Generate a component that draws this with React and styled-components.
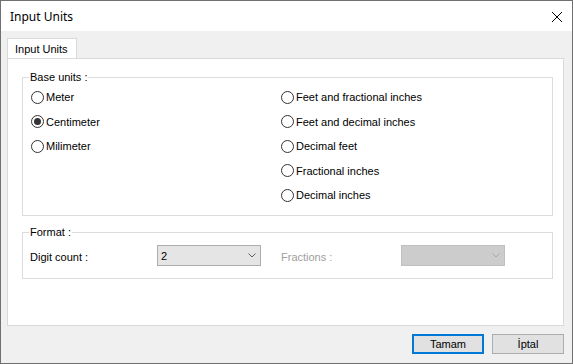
import React, { useState } from 'react';
import styled, { createGlobalStyle } from 'styled-components';

const GlobalStyle = createGlobalStyle`
  html, body {
    margin: 0;
    padding: 0;
    background: #f0f0f0;
  }
  * {
    box-sizing: border-box;
  }
`;

const Window = styled.div`
  width: 573px;
  height: 364px;
  border: 1px solid #707070;
  display: flex;
  flex-direction: column;
  font-family: "Liberation Sans", Arial, sans-serif;
  font-size: 11px;
  color: #000;
  background: #f0f0f0;
`;

const TitleBar = styled.div`
  height: 30px;
  background: #fff;
  display: flex;
  align-items: center;
  justify-content: space-between;
  padding: 0 10px 0 9px;
`;

const Title = styled.span`
  font-family: "Noto Sans", "Open Sans", sans-serif;
  font-size: 12px;
  line-height: 14px;
  margin-top: 2px;
`;

const CloseButton = styled.button`
  width: 10px;
  height: 10px;
  padding: 0;
  border: 0;
  background: none;
  display: flex;
  margin-top: 1px;
`;

const Body = styled.div`
  flex: 1;
  display: flex;
  flex-direction: column;
  padding: 7px 8px 9px 6px;
`;

const TabStrip = styled.div`
  display: flex;
  height: 20px;
`;

const Tab = styled.div`
  width: 70px;
  height: 20px;
  border: 1px solid #d9d9d9;
  border-bottom: 0;
  background: #fff;
  padding: 3px 0 0 7px;
  line-height: 14px;
`;

const Panel = styled.div`
  height: 268px;
  border: 1px solid #d9d9d9;
  background: #fff;
  padding: 18px 10px 0 14px;
  display: flex;
  flex-direction: column;
  gap: 16px;
`;

const GroupBox = styled.div`
  position: relative;
  height: ${(p) => p.$height}px;
  border: 1px solid #dcdcdc;
`;

const GroupLabel = styled.span`
  position: absolute;
  left: 6px;
  top: -8px;
  padding: 0 1px;
  background: #fff;
  line-height: 14px;
`;

const Columns = styled.div`
  display: flex;
  padding: 7px 0 0 8px;
`;

const Column = styled.div`
  width: ${(p) => p.$width || 'auto'};
  display: flex;
  flex-direction: column;
`;

const RadioRow = styled.label`
  height: 24.5px;
  display: flex;
  align-items: center;
  gap: 2px;
  cursor: default;
`;

const RadioCircle = styled.span`
  width: 13px;
  height: 13px;
  border-radius: 50%;
  border: 1px solid #333;
  background: #fff;
  display: flex;
  align-items: center;
  justify-content: center;
  flex: none;

  &::after {
    content: '';
    width: 7px;
    height: 7px;
    border-radius: 50%;
    background: ${(p) => (p.$checked ? '#333' : 'transparent')};
  }
`;

const FormatRow = styled.div`
  display: flex;
  align-items: center;
  padding: 12px 0 0 7px;
`;

const FieldLabel = styled.span`
  width: ${(p) => p.$width}px;
  color: ${(p) => (p.$disabled ? '#a0a0a0' : '#000')};
  line-height: 14px;
  margin-top: 3px;
`;

const Combo = styled.div`
  width: 104px;
  height: 21px;
  border: 1px solid ${(p) => (p.$disabled ? '#bfbfbf' : '#adadad')};
  background: ${(p) => (p.$disabled ? '#cccccc' : '#e5e5e5')};
  display: flex;
  align-items: center;
  justify-content: space-between;
  padding: 0 4px 0 3px;
  margin-right: ${(p) => p.$gap || 0}px;
`;

const ComboValue = styled.span`
  line-height: 14px;
`;

const ButtonBar = styled.div`
  display: flex;
  justify-content: flex-end;
  gap: 8px;
  margin-top: 8px;
`;

const DialogButton = styled.button`
  width: 72px;
  height: 20px;
  padding: 0;
  font-family: "Liberation Sans", Arial, sans-serif;
  font-size: 11px;
  color: #000;
  background: #e1e1e1;
  border: ${(p) => (p.$default ? '2px solid #0078d7' : '1px solid #adadad')};
`;

const Chevron = ({ color }) => (
  <svg width="8" height="5" viewBox="0 0 8 5">
    <path d="M0.5 0.5 L4 4 L7.5 0.5" fill="none" stroke={color} strokeWidth="1" />
  </svg>
);

const leftUnits = ['Meter', 'Centimeter', 'Milimeter'];
const rightUnits = [
  'Feet and fractional inches',
  'Feet and decimal inches',
  'Decimal feet',
  'Fractional inches',
  'Decimal inches',
];

export default function App() {
  const [unit, setUnit] = useState('Centimeter');

  const renderRadio = (name) => (
    <RadioRow key={name} onClick={() => setUnit(name)}>
      <RadioCircle $checked={unit === name} />
      <span>{name}</span>
    </RadioRow>
  );

  return (
    <>
      <GlobalStyle />
      <Window>
        <TitleBar>
          <Title>Input Units</Title>
          <CloseButton aria-label="Close">
            <svg width="10" height="10" viewBox="0 0 10 10">
              <path d="M0 0 L10 10 M10 0 L0 10" stroke="#000" strokeWidth="1" />
            </svg>
          </CloseButton>
        </TitleBar>
        <Body>
          <TabStrip>
            <Tab>Input Units</Tab>
          </TabStrip>
          <Panel>
            <GroupBox $height={139}>
              <GroupLabel>Base units :</GroupLabel>
              <Columns>
                <Column $width="250px">{leftUnits.map(renderRadio)}</Column>
                <Column>{rightUnits.map(renderRadio)}</Column>
              </Columns>
            </GroupBox>
            <GroupBox $height={47}>
              <GroupLabel>Format :</GroupLabel>
              <FormatRow>
                <FieldLabel $width={127}>Digit count :</FieldLabel>
                <Combo $gap={20}>
                  <ComboValue>2</ComboValue>
                  <Chevron color="#606060" />
                </Combo>
                <FieldLabel $width={120} $disabled>Fractions :</FieldLabel>
                <Combo $disabled>
                  <ComboValue />
                  <Chevron color="#a8a8a8" />
                </Combo>
              </FormatRow>
            </GroupBox>
          </Panel>
          <ButtonBar>
            <DialogButton $default>Tamam</DialogButton>
            <DialogButton>İptal</DialogButton>
          </ButtonBar>
        </Body>
      </Window>
    </>
  );
}
